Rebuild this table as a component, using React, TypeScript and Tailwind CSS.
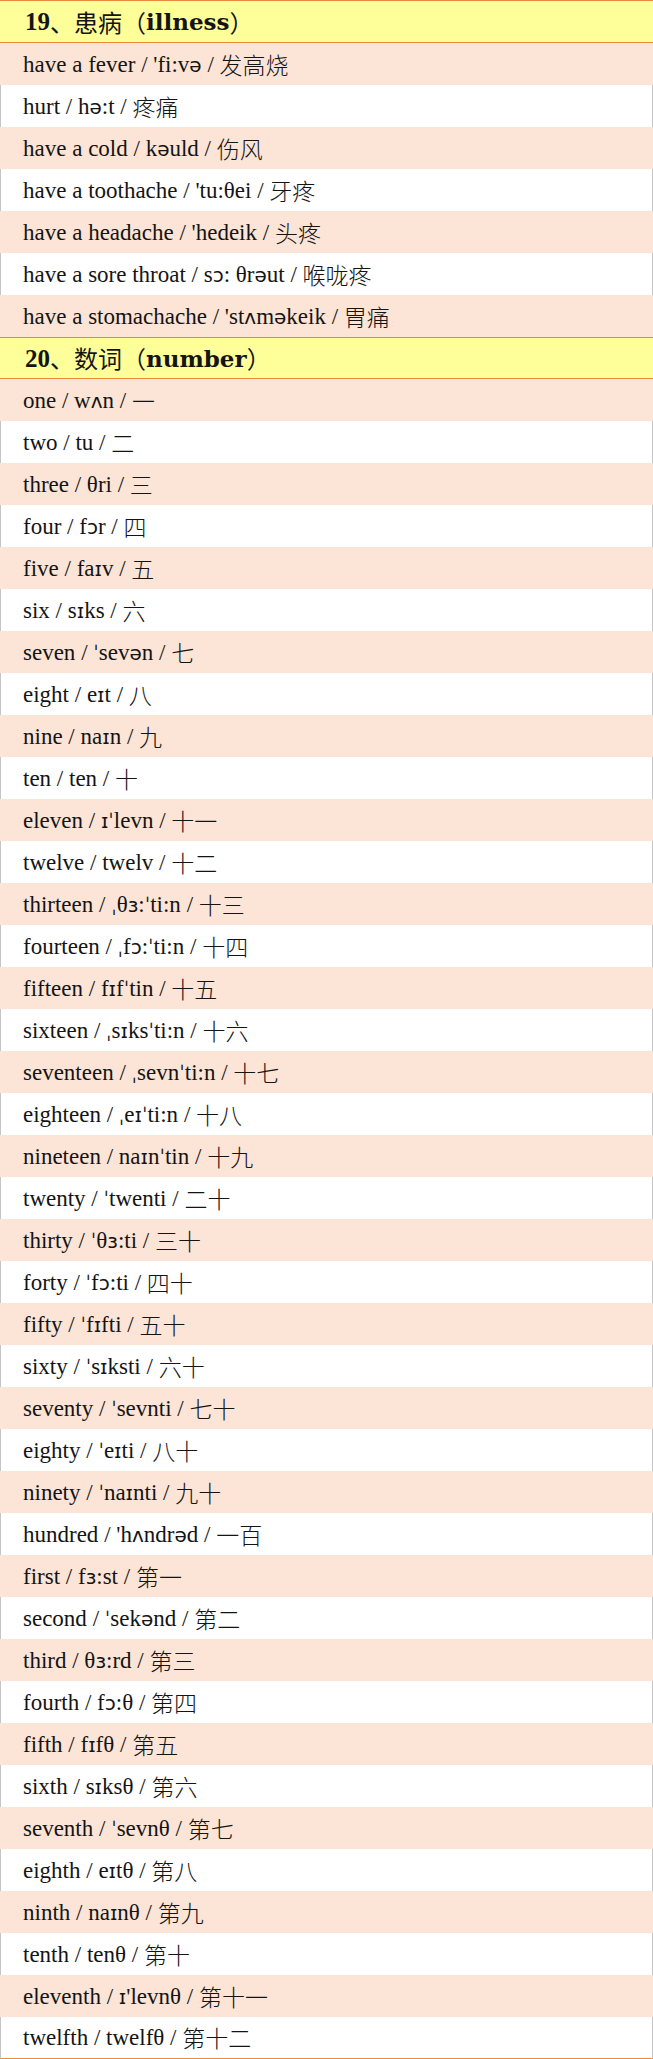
import React from "react";

const sections = [
  {
    title: "19",
    cn: "患病",
    en: "illness",
    rows: [
      "have a fever / 'fi:və / 发高烧",
      "hurt / hə:t / 疼痛",
      "have a cold / kəuld / 伤风",
      "have a toothache / 'tu:θei / 牙疼",
      "have a headache / 'hedeik / 头疼",
      "have a sore throat / sɔ: θrəut / 喉咙疼",
      "have a stomachache / 'stʌməkeik / 胃痛",
    ],
  },
  {
    title: "20",
    cn: "数词",
    en: "number",
    rows: [
      "one / wʌn / 一",
      "two / tu / 二",
      "three / θri / 三",
      "four / fɔr / 四",
      "five / faɪv / 五",
      "six / sɪks / 六",
      "seven / ˈsevən / 七",
      "eight / eɪt / 八",
      "nine / naɪn / 九",
      "ten / ten / 十",
      "eleven / ɪˈlevn / 十一",
      "twelve / twelv / 十二",
      "thirteen / ˌθɜ:ˈti:n / 十三",
      "fourteen / ˌfɔ:ˈti:n / 十四",
      "fifteen / fɪfˈtin / 十五",
      "sixteen / ˌsɪksˈti:n / 十六",
      "seventeen / ˌsevnˈti:n / 十七",
      "eighteen / ˌeɪˈti:n / 十八",
      "nineteen / naɪnˈtin / 十九",
      "twenty / ˈtwenti / 二十",
      "thirty / ˈθɜ:ti / 三十",
      "forty / ˈfɔ:ti / 四十",
      "fifty / ˈfɪfti / 五十",
      "sixty / ˈsɪksti / 六十",
      "seventy / ˈsevnti / 七十",
      "eighty / ˈeɪti / 八十",
      "ninety / ˈnaɪnti / 九十",
      "hundred / 'hʌndrəd / 一百",
      "first / fɜ:st / 第一",
      "second / ˈsekənd / 第二",
      "third / θɜ:rd / 第三",
      "fourth / fɔ:θ / 第四",
      "fifth / fɪfθ / 第五",
      "sixth / sɪksθ / 第六",
      "seventh / ˈsevnθ / 第七",
      "eighth / eɪtθ / 第八",
      "ninth / naɪnθ / 第九",
      "tenth / tenθ / 第十",
      "eleventh / ɪ'levnθ / 第十一",
      "twelfth / twelfθ / 第十二",
    ],
  },
];

// IPA symbols come from a sans fallback in the original sheet
const IPA = "ʌəɔɜɪˈˌ";

const Phonetic = ({ text }: { text: string }) => {
  const pieces: { s: string; ipa: boolean }[] = [];
  for (const ch of text) {
    const ipa = IPA.includes(ch);
    const prev = pieces[pieces.length - 1];
    if (prev && prev.ipa === ipa) prev.s += ch;
    else pieces.push({ s: ch, ipa });
  }
  return (
    <>
      {pieces.map((p, i) =>
        p.ipa ? (
          <span key={i} className="font-['DejaVu_Sans',sans-serif] text-[20px]">
            {p.s}
          </span>
        ) : (
          <span key={i}>{p.s}</span>
        )
      )}
    </>
  );
};

const App = () => {
  return (
    <div className="w-[653px] bg-white font-['Liberation_Serif','Noto_Sans_CJK_SC',serif] text-[#141414]">
      {sections.map((section, si) => (
        <div key={section.en}>
          {/* Section header */}
          <div
            className={
              si === 0
                ? "flex h-[43px] items-center border-y border-[#e98a3c] bg-[#ffff99] pl-[25px]"
                : "flex h-[42px] items-center border-y border-[#e98a3c] bg-[#ffff99] pl-[25px]"
            }
          >
            <span className="text-[25px] font-bold leading-none">{section.title}</span>
            <span className="font-['Noto_Sans_CJK_SC',sans-serif] text-[24px] leading-none font-normal">
              、{section.cn}（
            </span>
            <span className="font-['DejaVu_Serif',serif] text-[23px] font-bold leading-none">{section.en}</span>
            <span className="font-['Noto_Sans_CJK_SC',sans-serif] text-[24px] leading-none font-normal">）</span>
          </div>

          {/* Rows */}
          {section.rows.map((row, i) => {
            const last = si === sections.length - 1 && i === section.rows.length - 1;
            const parts = row.split(" / ");
            return (
              <div
                key={row}
                className={
                  (i % 2 === 0 ? "bg-[#fce4d6] pl-[23px] " : "bg-white border-x border-[#c4c4c4] pl-[22px] ") +
                  (last ? "border-b border-b-[#e98a3c] " : "") +
                  "flex h-[42px] items-center whitespace-pre text-[23px] leading-none"
                }
              >
                <span>
                  {parts[0]} / <Phonetic text={parts[1]} /> /{" "}
                </span>
                <span className="font-['Noto_Sans_CJK_SC',sans-serif] text-[23px] font-light">{parts[2]}</span>
              </div>
            );
          })}
        </div>
      ))}
    </div>
  );
};

export default App;
